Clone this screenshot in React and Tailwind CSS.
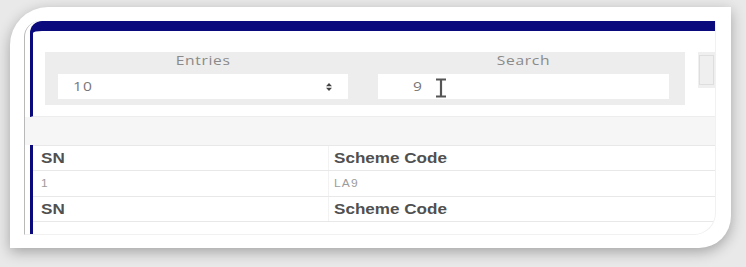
export default function App() {
  const rows = [
    { a: 'SN', b: 'Scheme Code', head: true, h: 'h-[25px]' },
    { a: '1', b: 'LA9', head: false, h: 'h-[26px]' },
    { a: 'SN', b: 'Scheme Code', head: true, h: 'h-[25px]' },
  ]

  return (
    <div className="w-[746px] h-[267px] overflow-hidden bg-[#e9e9e9] pt-[7px] pl-[10px]">
      <div className="w-[721px] h-[241px] bg-white rounded-tl-[38px] rounded-br-[32px] shadow-[0_4px_14px_rgba(0,0,0,0.3)] pt-[14px] pl-[14px]">
        <div className="w-[692px] h-[214px] flex flex-col overflow-hidden border-l border-r border-b border-[#b9b9b9] border-r-[#f1f1f1] border-b-[#f1f1f1] rounded-tl-[16px] rounded-br-[22px]">

          {/* filter panel */}
          <div className="ml-[5px] h-[96px] shrink-0 border-l-[3px] border-t-[10px] border-[#0a0a7d] rounded-tl-[12px] border-b border-b-[#ededed] flex items-start pt-[21px] pl-[12px] gap-[13px]">
            <div className="w-[640px] h-[53px] bg-[#ededed] flex gap-[30px] pl-[13px] pr-[16px]">
              <div className="flex flex-col items-center">
                <div className="h-[22px] leading-[17px] text-[12px] tracking-[0.5px] text-[#8a8a8a] font-['Open_Sans',sans-serif]">
                  <span className="inline-block scale-x-[1.3]">Entries</span>
                </div>
                <div className="w-[290px] h-[25px] bg-white flex items-center justify-between pl-[15px] pr-[16px]">
                  <span className="inline-block origin-left scale-x-[1.2] text-[13px] tracking-[1px] text-[#777] font-['Open_Sans',sans-serif]">10</span>
                  <svg width="6" height="8" viewBox="0 0 6 8">
                    <path d="M3 0 L6 3.2 L0 3.2 Z M3 8 L6 4.8 L0 4.8 Z" fill="#444" />
                  </svg>
                </div>
              </div>
              <div className="flex flex-col items-center">
                <div className="h-[22px] leading-[17px] text-[12px] tracking-[0.5px] text-[#8a8a8a] font-['Open_Sans',sans-serif]">
                  <span className="inline-block scale-x-[1.3]">Search</span>
                </div>
                <div className="w-[291px] h-[25px] bg-white flex items-center pl-[35px]">
                  <span className="inline-block origin-left scale-x-[1.2] text-[13px] text-[#777] font-['Open_Sans',sans-serif]">9</span>
                  <svg className="ml-[15px] mt-[2px]" width="12" height="20" viewBox="0 0 12 20">
                    <path d="M1 1.5 H11 M6 1.5 V18.5 M1 18.5 H11" stroke="#555" strokeWidth="2.2" fill="none" />
                  </svg>
                </div>
              </div>
            </div>
            <div className="w-[30px] h-[36px] shrink-0 bg-[#efefef] pt-[3px] pl-[1px]">
              <div className="w-[15px] h-[30px] border border-[#dedede]" />
            </div>
          </div>

          {/* band */}
          <div className="h-[28px] shrink-0 bg-[#f7f6f7]" />

          {/* table */}
          <div className="ml-[5px] flex-1 border-l-[3px] border-[#0a0a7d] flex flex-col">
            {rows.map((r, i) => (
              <div key={i} className={`${r.h} shrink-0 flex border-t border-[#e8e8e8]`}>
                <div className="w-[295px] pl-[8px] flex items-center">
                  {r.head ? (
                    <span className="inline-block origin-left scale-x-[1.22] text-[14px] font-bold text-[#505050] font-['Liberation_Sans',Arial,sans-serif]">{r.a}</span>
                  ) : (
                    <span className="inline-block origin-left scale-x-[1.2] text-[10px] tracking-[1px] text-[#9c9c9c] font-['Liberation_Sans',Arial,sans-serif]">{r.a}</span>
                  )}
                </div>
                <div className="flex-1 pl-[5px] flex items-center border-l border-[#f2f2f2]">
                  {r.head ? (
                    <span className="inline-block origin-left scale-x-[1.22] text-[14px] font-bold text-[#505050] font-['Liberation_Sans',Arial,sans-serif]">{r.b}</span>
                  ) : (
                    <span className="inline-block origin-left scale-x-[1.2] text-[10px] tracking-[1px] text-[#9c9c9c] font-['Liberation_Sans',Arial,sans-serif]">{r.b}</span>
                  )}
                </div>
              </div>
            ))}
            <div className="flex-1 border-t border-[#e8e8e8]" />
          </div>
        </div>
      </div>
    </div>
  )
}
